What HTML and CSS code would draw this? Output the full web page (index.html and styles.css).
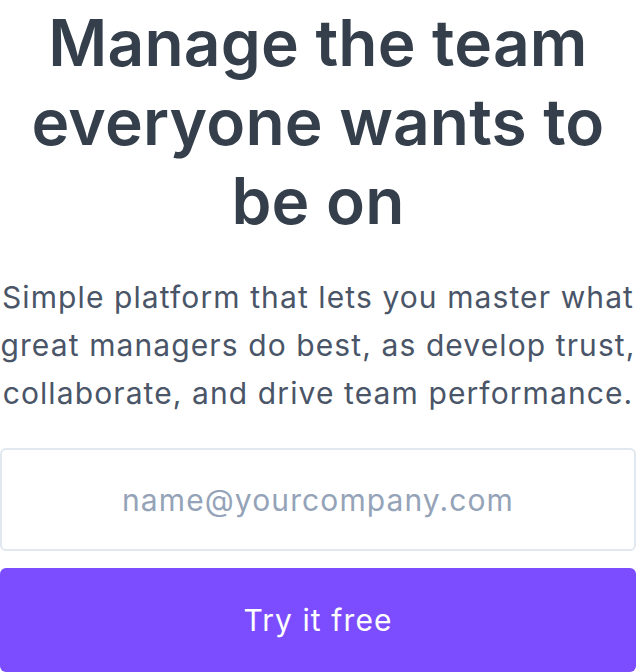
FILE: index.html
```html
<!DOCTYPE html>
<html>
<head>
<meta charset="utf-8">
<link rel="stylesheet" href="styles.css">
</head>
<body>
<main class="hero">
  <h1 class="title">Manage the team everyone wants to be on</h1>
  <p class="lead">Simple platform that lets you master what great managers do best, as develop trust, collaborate, and drive team performance.</p>
  <form class="signup">
    <input class="email" type="email" placeholder="name@yourcompany.com">
    <button class="cta" type="button">Try it free</button>
  </form>
</main>
</body>
</html>
```
FILE: styles.css
```css
html, body {
  margin: 0;
  padding: 0;
  background: #ffffff;
}
body {
  font-family: Inter, "Noto Sans", sans-serif;
}
.hero {
  display: flex;
  flex-direction: column;
  text-align: center;
  padding-top: 3px;
}
.title {
  margin: 0;
  font-size: 64px;
  line-height: 79px;
  font-weight: 600;
  color: #343f4b;
  letter-spacing: 0.2px;
  padding: 0 20px;
}
.lead {
  margin: 33px 0 0;
  font-size: 30px;
  line-height: 48px;
  font-weight: 400;
  letter-spacing: 1.1px;
  color: #4a5568;
}
.signup {
  display: flex;
  flex-direction: column;
  gap: 17px;
  margin-top: 31px;
}
.email {
  box-sizing: border-box;
  height: 103px;
  width: 100%;
  border: 2px solid #e2e8f0;
  border-radius: 6px;
  font-family: inherit;
  font-size: 30px;
  letter-spacing: 1.1px;
  text-align: center;
  color: #334155;
  outline: none;
  padding: 0 16px;
}
.email::placeholder {
  color: #94a3b8;
}
.cta {
  box-sizing: border-box;
  height: 104px;
  width: 100%;
  border: none;
  border-radius: 6px;
  background: #7c4dff;
  color: #ffffff;
  font-family: inherit;
  font-size: 30px;
  letter-spacing: 1.1px;
  font-weight: 400;
  cursor: pointer;
}
```
